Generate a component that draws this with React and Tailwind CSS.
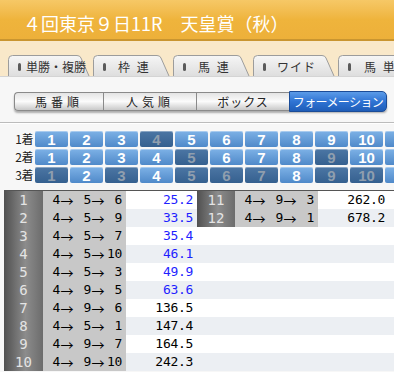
import React from "react";

const tabs = [
  { label: "単勝・複勝", w: 82, textCls: "ml-[5px] tracking-[0px]" },
  { label: "枠 連", w: 77, textCls: "ml-[12px] tracking-[2px]" },
  { label: "馬 連", w: 77, textCls: "ml-[12px] tracking-[2px]" },
  { label: "ワイド", w: 82, textCls: "ml-[11px] tracking-[1px]" },
  { label: "馬 単", w: 82, textCls: "ml-[13px] tracking-[2px]" },
];

function Tab({ t, i }) {
  const w = t.w;
  const d = `M0.5,21 L0.5,4.5 Q0.5,0.5 4.5,0.5 L${w - 13},0.5 Q${w - 10},0.5 ${w - 9},3 L${w - 1},21`;
  return (
    <div className="relative h-[21px] shrink-0" style={{ width: w }}>
      <svg className="absolute inset-0" width={w} height="21" viewBox={`0 0 ${w} 21`}>
        <defs>
          <linearGradient id={`tg${i}`} x1="0" y1="0" x2="0" y2="1">
            <stop offset="0" stopColor="#f6f6f6" />
            <stop offset="1" stopColor="#dedede" />
          </linearGradient>
        </defs>
        <path d={d + " Z"} fill={`url(#tg${i})`} />
        <path d={d} fill="none" stroke="#9c9c9c" strokeWidth="1" />
      </svg>
      <div className="relative flex h-full items-center pl-[10px] pt-[3px]">
        <span className="h-[8px] w-[3px] rounded-full bg-[#5a5a5a]" />
        <span className={"text-[12px] leading-none text-[#333] " + t.textCls}>{t.label}</span>
      </div>
    </div>
  );
}

const selected = [[4], [5, 9], [1, 3, 5, 6, 7, 9, 10]];

const results = [
  [1, 4, 5, 6, "25.2"],
  [2, 4, 5, 9, "33.5"],
  [3, 4, 5, 7, "35.4"],
  [4, 4, 5, 10, "46.1"],
  [5, 4, 5, 3, "49.9"],
  [6, 4, 9, 5, "63.6"],
  [7, 4, 9, 6, "136.5"],
  [8, 4, 5, 1, "147.4"],
  [9, 4, 9, 7, "164.5"],
  [10, 4, 9, 10, "242.3"],
  [11, 4, 9, 3, "262.0"],
  [12, 4, 9, 1, "678.2"],
];

const mono = "font-['DejaVu_Sans_Mono',monospace] text-[13px] tracking-[-0.3px]";

function Combo({ a, b, c, cls }) {
  return (
    <div className={"flex h-full items-center bg-[#c8c8c8] text-black " + cls}>
      <span className={"w-[17px] text-right " + mono}>{a}</span>
      <span className="w-[14px] text-center font-['Noto_Sans_CJK_JP',sans-serif] text-[13px] leading-none">→</span>
      <span className={"w-[17px] text-right " + mono}>{b}</span>
      <span className="w-[14px] text-center font-['Noto_Sans_CJK_JP',sans-serif] text-[13px] leading-none">→</span>
      <span className={"w-[17px] text-right " + mono}>{c}</span>
    </div>
  );
}

function Index({ n, cls }) {
  return (
    <div
      className={
        "flex h-full items-center justify-center bg-[linear-gradient(to_right,#505050,#8c8c8c_55%,#6c6c6c)] text-[14px] text-[#e4e4e4] font-['DejaVu_Sans_Mono',monospace] " +
        cls
      }
    >
      {n}
    </div>
  );
}

function Value({ v, cls }) {
  const blue = parseFloat(v) < 100;
  return (
    <div className={"flex h-full items-center justify-end " + mono + " " + (blue ? "text-[#1f1fff] " : "text-black ") + cls}>
      {v}
    </div>
  );
}

export default function App() {
  return (
    <div className="relative h-[372px] w-[394px] overflow-hidden bg-[#f7f7f7] font-['Noto_Sans_CJK_JP',sans-serif]">
      {/* header */}
      <div className="h-[41px] border-b-2 border-[#c99530] bg-gradient-to-b from-[#f6c866] via-[#efb43c] to-[#edb03a] pl-[23px] pt-[10px]">
        <div className="text-[18px] leading-[26px] text-white">４回東京９日11R　天皇賞（秋）</div>
      </div>
      {/* tabs */}
      <div className="flex h-[35px] items-end gap-[3px] bg-[#f9e8c9] pl-[8px]">
        {tabs.map((t, i) => (
          <Tab key={i} t={t} i={i} />
        ))}
      </div>
      {/* content */}
      <div className="border-t border-[#d4d4d4] bg-[#f7f7f7] pt-[15px]">
        <div className="ml-[14px] flex h-[19px] w-[373px] rounded-[4px] shadow-[0_2px_2px_rgba(0,0,0,0.3)]">
          <div className="flex w-[89px] items-center justify-center rounded-l-[4px] border-y border-l border-[#8a8a8a] bg-gradient-to-b from-[#e4e4e4] via-[#fbfbfb] to-[#c9c9c9] text-[12px] tracking-[4px] text-[#222]">
            馬番順
          </div>
          <div className="flex w-[93px] items-center justify-center border-y border-l border-[#8a8a8a] bg-gradient-to-b from-[#e4e4e4] via-[#fbfbfb] to-[#c9c9c9] text-[12px] tracking-[4px] text-[#222]">
            人気順
          </div>
          <div className="flex w-[93px] items-center justify-center border-y border-l border-[#8a8a8a] bg-gradient-to-b from-[#e4e4e4] via-[#fbfbfb] to-[#c9c9c9] text-[12px] tracking-[1px] text-[#222]">
            ボックス
          </div>
          <div className="-my-[1px] flex w-[98px] items-center justify-center rounded-r-[5px] border border-[#1b4c98] bg-gradient-to-b from-[#5b9be8] via-[#2f74d4] to-[#1f5db8] text-[12px] tracking-[-0.6px] text-white">
            フォーメーション
          </div>
        </div>
        <div className="mt-[11px] h-px bg-[#bcbcbc]" />
        <div className="h-px bg-white" />
        {/* grid */}
        <div className="mt-[7px] flex flex-col gap-[2px]">
          {selected.map((sel, r) => (
            <div key={r} className="flex h-[16px] gap-[2px]">
              <div className="w-[33px] shrink-0 text-right text-[12px] leading-[16px] tracking-[-0.5px] text-[#222]">
                {r + 1}着
              </div>
              {[1, 2, 3, 4, 5, 6, 7, 8, 9, 10, 11].map((n) => {
                const on = sel.includes(n);
                return (
                  <div
                    key={n}
                    className={
                      "flex h-[16px] w-[33px] shrink-0 items-center justify-center rounded-[2px] font-['Liberation_Sans',sans-serif] text-[15px] font-bold leading-none shadow-[inset_0_1px_0_rgba(255,255,255,0.35)] " +
                      (on
                        ? "bg-gradient-to-b from-[#4c76a4] to-[#35608f] text-[#8f9eae]"
                        : "bg-gradient-to-b from-[#7db1e6] to-[#4f89c9] text-white")
                    }
                  >
                    {n <= 10 ? n : ""}
                  </div>
                );
              })}
            </div>
          ))}
        </div>
        {/* table */}
        <div className="ml-[4px] mt-[7px] border-t border-[#555]">
          {results.slice(0, 10).map((row, i) => {
            const g2 = results[i + 10];
            return (
              <div key={i} className={"flex h-[18px] " + (i % 2 === 1 ? "bg-[#eceff3]" : "bg-white")}>
                <Index n={row[0]} cls="w-[39px]" />
                <Combo a={row[1]} b={row[2]} c={row[3]} cls="w-[83px]" />
                <Value v={row[4]} cls="w-[71px] pr-[4px]" />
                {g2 ? (
                  <>
                    <Index n={g2[0]} cls="w-[38px]" />
                    <Combo a={g2[1]} b={g2[2]} c={g2[3]} cls="w-[83px] pl-[-1px]" />
                    <Value v={g2[4]} cls="flex-1 pr-[9px]" />
                  </>
                ) : null}
              </div>
            );
          })}
        </div>
      </div>
    </div>
  );
}
